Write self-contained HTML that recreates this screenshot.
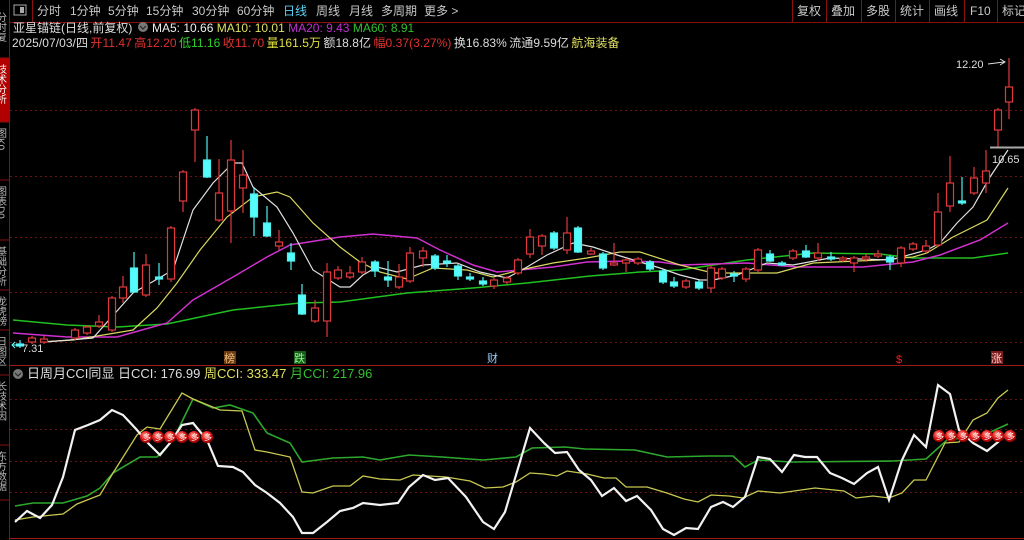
<!DOCTYPE html>
<html><head><meta charset="utf-8"><style>
html,body{margin:0;padding:0;background:#000;width:1024px;height:540px;overflow:hidden}
body{font-family:"Liberation Sans","Noto Sans CJK SC",sans-serif;position:relative}
.t{position:absolute;white-space:nowrap;font-size:12px;line-height:14px}
.m{position:absolute;top:4px;font-size:12px;line-height:14px;color:#c8c8c8;white-space:nowrap}
</style></head><body>
<svg width="1024" height="540" style="position:absolute;left:0;top:0" font-family="Liberation Sans, Noto Sans CJK SC, sans-serif">
<rect x="0" y="58" width="9" height="64" fill="#b00000"/>
<g stroke="#8a1010" stroke-width="1">
<line x1="9.5" y1="0" x2="9.5" y2="540"/>
<line x1="0" y1="58" x2="9" y2="58"/><line x1="0" y1="122" x2="9" y2="122"/><line x1="0" y1="180" x2="9" y2="180"/><line x1="0" y1="240" x2="9" y2="240"/><line x1="0" y1="290" x2="9" y2="290"/><line x1="0" y1="330" x2="9" y2="330"/><line x1="0" y1="375" x2="9" y2="375"/><line x1="0" y1="445" x2="9" y2="445"/><line x1="0" y1="500" x2="9" y2="500"/>
</g>
<g fill="#bbb" font-size="10">
<text x="0" y="12" writing-mode="tb">分时复</text>
<text x="0" y="64" writing-mode="tb" fill="#fff">技术分析</text>
<text x="0" y="128" writing-mode="tb">图K0</text>
<text x="0" y="186" writing-mode="tb">图表D0</text>
<text x="0" y="246" writing-mode="tb">基础分析</text>
<text x="0" y="296" writing-mode="tb">龙虎榜</text>
<text x="0" y="336" writing-mode="tb">日图区</text>
<text x="0" y="381" writing-mode="tb">长技术因</text>
<text x="0" y="451" writing-mode="tb">东方数据</text>
</g>
<line x1="10" y1="22.5" x2="1024" y2="22.5" stroke="#8a1010"/>
<line x1="32.5" y1="0" x2="32.5" y2="22" stroke="#8a1010"/>
<rect x="14" y="5" width="12" height="10" fill="none" stroke="#aaa"/><rect x="20" y="7" width="4" height="6" fill="#aaa"/>
<g stroke="#8a1010"><line x1="792.5" y1="0" x2="792.5" y2="22"/><line x1="826.5" y1="0" x2="826.5" y2="22"/><line x1="861.5" y1="0" x2="861.5" y2="22"/><line x1="895.5" y1="0" x2="895.5" y2="22"/><line x1="929.5" y1="0" x2="929.5" y2="22"/><line x1="964.5" y1="0" x2="964.5" y2="22"/><line x1="997.5" y1="0" x2="997.5" y2="22"/></g>
<g stroke="#6a1515" stroke-dasharray="2,3"><line x1="10" y1="110.5" x2="1024" y2="110.5"/><line x1="10" y1="176.5" x2="1024" y2="176.5"/><line x1="10" y1="237.5" x2="1024" y2="237.5"/><line x1="10" y1="292.5" x2="1024" y2="292.5"/><line x1="10" y1="342.5" x2="1024" y2="342.5"/>
<line x1="10" y1="399.5" x2="1024" y2="399.5"/><line x1="10" y1="429.5" x2="1024" y2="429.5"/><line x1="10" y1="461.5" x2="1024" y2="461.5"/><line x1="10" y1="492.5" x2="1024" y2="492.5"/></g>
<line x1="10" y1="365.5" x2="1024" y2="365.5" stroke="#9a1a1a"/>
<line x1="10" y1="538.5" x2="1024" y2="538.5" stroke="#9a1a1a"/>
<g fill="none" stroke-width="1.2">
<polyline stroke="#20c020" stroke-width="1.5" points="13,320 67,325 117,327 167,324 233,310 300,303 340,302 407,293 473,288 527,283 590,276 640,272 680,270 747,260 813,253 880,254 913,258 973,258 1008,253"/>
<polyline stroke="#d030d0" stroke-width="1.5" points="13,333 67,337 117,337 167,323 193,300 233,277 267,257 290,245 340,237 373,234 417,238 440,250 473,265 497,272 520,270 553,267 587,262 627,261 660,262 680,265 747,263 797,267 863,267 913,262 940,255 980,240 1008,223"/>
<polyline stroke="#d8d860" points="40,342 73,340 133,330 157,308 177,283 200,250 227,217 253,197 277,192 290,197 313,223 340,247 360,262 380,272 407,279 433,268 467,270 493,277 520,270 553,263 587,258 620,252 640,252 680,265 713,273 747,273 777,273 813,263 880,260 913,257 927,253 953,237 987,220 1008,188"/>
<polyline stroke="#e0e0e0" points="45,342 93,338 133,293 173,270 193,210 213,183 233,163 242,163 253,187 277,207 293,233 313,270 340,287 350,287 363,275 377,267 397,272 423,265 457,263 480,272 507,278 527,267 547,255 573,243 593,247 617,255 640,262 660,268 680,275 700,280 713,280 737,275 767,263 793,265 830,258 890,260 927,250 940,243 957,223 973,207 990,177 1008,150"/>
</g>
<g stroke="#e0383c" fill="#000" stroke-width="1.2">
<line x1="32" y1="336" x2="32" y2="344"/><rect x="28.5" y="338" width="7" height="4"/>
<line x1="44" y1="336" x2="44" y2="344"/><rect x="40.5" y="339" width="7" height="3"/>
<line x1="75" y1="328" x2="75" y2="340"/><rect x="71.5" y="330" width="7" height="8"/>
<line x1="87" y1="325" x2="87" y2="335"/><rect x="83.5" y="327" width="7" height="6"/>
<line x1="99" y1="315" x2="99" y2="328"/><rect x="95.5" y="322" width="7" height="4"/>
<line x1="112" y1="296" x2="112" y2="332"/><rect x="108.5" y="298" width="7" height="32"/>
<line x1="123" y1="276" x2="123" y2="303"/><rect x="119.5" y="287" width="7" height="11"/>
<line x1="146" y1="254" x2="146" y2="297"/><rect x="142.5" y="265" width="7" height="30"/>
<line x1="171" y1="226" x2="171" y2="282"/><rect x="167.5" y="228" width="7" height="51"/>
<line x1="183" y1="170" x2="183" y2="212"/><rect x="179.5" y="172" width="7" height="29"/>
<line x1="195" y1="108" x2="195" y2="162"/><rect x="191.5" y="110" width="7" height="20"/>
<line x1="219" y1="159" x2="219" y2="222"/><rect x="215.5" y="193" width="7" height="27"/>
<line x1="231" y1="140" x2="231" y2="243"/><rect x="227.5" y="160" width="7" height="51"/>
<line x1="243" y1="150" x2="243" y2="213"/><rect x="239.5" y="175" width="7" height="13"/>
<line x1="279" y1="230" x2="279" y2="250"/><rect x="275.5" y="242" width="7" height="4"/>
<line x1="315" y1="300" x2="315" y2="323"/><rect x="311.5" y="308" width="7" height="13"/>
<line x1="327" y1="263" x2="327" y2="337"/><rect x="323.5" y="272" width="7" height="49"/>
<line x1="338" y1="266" x2="338" y2="280"/><rect x="334.5" y="270" width="7" height="8"/>
<line x1="350" y1="266" x2="350" y2="279"/><rect x="346.5" y="273" width="7" height="4"/>
<line x1="362" y1="257" x2="362" y2="274"/><rect x="358.5" y="262" width="7" height="10"/>
<line x1="399" y1="264" x2="399" y2="289"/><rect x="395.5" y="277" width="7" height="10"/>
<line x1="410" y1="247" x2="410" y2="283"/><rect x="406.5" y="253" width="7" height="28"/>
<line x1="423" y1="247" x2="423" y2="267"/><rect x="419.5" y="251" width="7" height="7"/>
<line x1="494" y1="278" x2="494" y2="289"/><rect x="490.5" y="280" width="7" height="6"/>
<line x1="507" y1="276" x2="507" y2="284"/><rect x="503.5" y="278" width="7" height="4"/>
<line x1="518" y1="258" x2="518" y2="275"/><rect x="514.5" y="260" width="7" height="13"/>
<line x1="530" y1="229" x2="530" y2="258"/><rect x="526.5" y="237" width="7" height="17"/>
<line x1="542" y1="234" x2="542" y2="255"/><rect x="538.5" y="236" width="7" height="10"/>
<line x1="567" y1="217" x2="567" y2="254"/><rect x="563.5" y="233" width="7" height="17"/>
<line x1="591" y1="248" x2="591" y2="255"/><rect x="587.5" y="251" width="7" height="3"/>
<line x1="614" y1="243" x2="614" y2="266"/><rect x="610.5" y="263" width="7" height="2"/>
<line x1="626" y1="258" x2="626" y2="272"/><rect x="622.5" y="260" width="7" height="3"/>
<line x1="638" y1="257" x2="638" y2="265"/><rect x="634.5" y="259" width="7" height="4"/>
<line x1="686" y1="279" x2="686" y2="289"/><rect x="682.5" y="281" width="7" height="6"/>
<line x1="711" y1="265" x2="711" y2="293"/><rect x="707.5" y="268" width="7" height="20"/>
<line x1="722" y1="267" x2="722" y2="280"/><rect x="718.5" y="269" width="7" height="9"/>
<line x1="746" y1="267" x2="746" y2="282"/><rect x="742.5" y="269" width="7" height="10"/>
<line x1="758" y1="248" x2="758" y2="272"/><rect x="754.5" y="250" width="7" height="20"/>
<line x1="793" y1="249" x2="793" y2="260"/><rect x="789.5" y="251" width="7" height="7"/>
<line x1="818" y1="243" x2="818" y2="261"/><rect x="814.5" y="253" width="7" height="5"/>
<line x1="843" y1="256" x2="843" y2="262"/><rect x="839.5" y="258" width="7" height="2"/>
<line x1="854" y1="256" x2="854" y2="272"/><rect x="850.5" y="258" width="7" height="5"/>
<line x1="866" y1="254" x2="866" y2="262"/><rect x="862.5" y="257" width="7" height="2"/>
<line x1="878" y1="250" x2="878" y2="258"/><rect x="874.5" y="254" width="7" height="2"/>
<line x1="901" y1="246" x2="901" y2="267"/><rect x="897.5" y="248" width="7" height="15"/>
<line x1="913" y1="242" x2="913" y2="251"/><rect x="909.5" y="244" width="7" height="5"/>
<line x1="926" y1="240" x2="926" y2="253"/><rect x="922.5" y="246" width="7" height="5"/>
<line x1="938" y1="193" x2="938" y2="247"/><rect x="934.5" y="212" width="7" height="33"/>
<line x1="950" y1="156" x2="950" y2="212"/><rect x="946.5" y="183" width="7" height="23"/>
<line x1="974" y1="167" x2="974" y2="195"/><rect x="970.5" y="178" width="7" height="15"/>
<line x1="986" y1="150" x2="986" y2="193"/><rect x="982.5" y="171" width="7" height="12"/>
<line x1="998" y1="108" x2="998" y2="147"/><rect x="994.5" y="110" width="7" height="20"/>
<line x1="1009" y1="58" x2="1009" y2="119"/><rect x="1005.5" y="87" width="7" height="15"/>
</g>
<g stroke="#50f0f0" fill="#54fcfc" stroke-width="1.2">
<line x1="20" y1="340" x2="20" y2="348"/><rect x="16.5" y="344" width="7" height="2"/>
<line x1="134" y1="252" x2="134" y2="293"/><rect x="130.5" y="268" width="7" height="24"/>
<line x1="159" y1="263" x2="159" y2="285"/><rect x="155.5" y="277" width="7" height="2"/>
<line x1="207" y1="136" x2="207" y2="178"/><rect x="203.5" y="160" width="7" height="17"/>
<line x1="254" y1="188" x2="254" y2="236"/><rect x="250.5" y="194" width="7" height="23"/>
<line x1="267" y1="206" x2="267" y2="237"/><rect x="263.5" y="223" width="7" height="13"/>
<line x1="291" y1="243" x2="291" y2="270"/><rect x="287.5" y="253" width="7" height="8"/>
<line x1="302" y1="284" x2="302" y2="315"/><rect x="298.5" y="295" width="7" height="19"/>
<line x1="375" y1="260" x2="375" y2="277"/><rect x="371.5" y="262" width="7" height="9"/>
<line x1="388" y1="261" x2="388" y2="287"/><rect x="384.5" y="277" width="7" height="3"/>
<line x1="435" y1="254" x2="435" y2="270"/><rect x="431.5" y="256" width="7" height="12"/>
<line x1="447" y1="255" x2="447" y2="267"/><rect x="443.5" y="261" width="7" height="2"/>
<line x1="458" y1="264" x2="458" y2="280"/><rect x="454.5" y="266" width="7" height="10"/>
<line x1="470" y1="273" x2="470" y2="281"/><rect x="466.5" y="277" width="7" height="2"/>
<line x1="483" y1="277" x2="483" y2="286"/><rect x="479.5" y="281" width="7" height="3"/>
<line x1="554" y1="231" x2="554" y2="250"/><rect x="550.5" y="233" width="7" height="15"/>
<line x1="578" y1="226" x2="578" y2="253"/><rect x="574.5" y="228" width="7" height="24"/>
<line x1="603" y1="252" x2="603" y2="270"/><rect x="599.5" y="254" width="7" height="14"/>
<line x1="650" y1="260" x2="650" y2="271"/><rect x="646.5" y="262" width="7" height="7"/>
<line x1="663" y1="269" x2="663" y2="284"/><rect x="659.5" y="271" width="7" height="11"/>
<line x1="674" y1="277" x2="674" y2="288"/><rect x="670.5" y="282" width="7" height="4"/>
<line x1="699" y1="280" x2="699" y2="290"/><rect x="695.5" y="282" width="7" height="6"/>
<line x1="734" y1="271" x2="734" y2="282"/><rect x="730.5" y="274" width="7" height="2"/>
<line x1="770" y1="250" x2="770" y2="262"/><rect x="766.5" y="254" width="7" height="7"/>
<line x1="782" y1="261" x2="782" y2="266"/><rect x="778.5" y="263" width="7" height="2"/>
<line x1="806" y1="245" x2="806" y2="258"/><rect x="802.5" y="251" width="7" height="6"/>
<line x1="831" y1="252" x2="831" y2="261"/><rect x="827.5" y="257" width="7" height="2"/>
<line x1="890" y1="255" x2="890" y2="270"/><rect x="886.5" y="257" width="7" height="5"/>
<line x1="962" y1="177" x2="962" y2="205"/><rect x="958.5" y="201" width="7" height="2"/>
</g>
<text x="956" y="68" fill="#ddd" font-size="11">12.20</text>
<path d="M988 64 L1004 62 M1000 59 L1005 62 L1000 65" stroke="#ddd" fill="none"/>
<line x1="990" y1="147.5" x2="1024" y2="147.5" stroke="#aaa" stroke-width="2"/>
<text x="992" y="163" fill="#ddd" font-size="11">10.65</text>
<text x="22" y="352" fill="#ddd" font-size="11">7.31</text>
<path d="M12 345 L20 345 M15 342 L12 345 L15 348" stroke="#6ff" fill="none"/>
<rect x="224" y="351" width="12" height="13" fill="#6a3a10"/><text x="224" y="362" font-size="11" fill="#f0c080">榜</text>
<rect x="294" y="351" width="12" height="13" fill="#1a5a1a"/><text x="294" y="362" font-size="11" fill="#8f8">跌</text>
<text x="487" y="362" font-size="11" fill="#9cf">财</text>
<text x="896" y="363" font-size="11" fill="#e22">$</text>
<rect x="991" y="351" width="12" height="13" fill="#7a1a1a"/><text x="991" y="362" font-size="11" fill="#fcc">涨</text>
<g fill="none" stroke-width="1.3">
<polyline stroke="#2da82d" stroke-width="1.6" points="15,506 33,503 63,503 87,496 100,488 113,473 140,457 157,457 173,440 193,399 213,408 230,405 253,413 267,433 290,443 302,462 333,458 363,457 380,460 409,455 442,457 483,460 516,457 532,448 565,447 585,449 635,450 667,457 709,456 733,456 745,467 758,460 791,462 893,461 926,459 947,440 984,435 1008,424"/>
<polyline stroke="#c8c850" points="15,520 33,517 63,514 77,504 100,495 113,473 137,435 147,427 160,429 182,393 193,399 220,410 242,411 255,450 267,452 290,457 302,492 313,493 333,486 350,486 363,476 380,479 400,480 413,475 446,477 470,481 485,488 503,487 516,482 530,473 544,474 557,476 567,471 587,474 604,478 616,478 626,487 647,487 667,493 684,499 698,502 711,495 729,496 743,498 758,491 780,493 815,488 844,491 856,498 873,496 889,498 902,493 914,480 926,480 945,443 959,442 973,420 987,413 998,398 1008,390"/>
<polyline stroke="#f2f2f2" stroke-width="2.2" points="15,522 27,511 40,518 52,505 63,477 75,430 88,425 100,420 112,410 123,415 137,430 148,443 160,455 170,443 182,425 193,423 207,440 218,466 233,467 243,472 255,485 267,493 280,503 293,517 302,533 313,533 327,522 340,511 353,508 363,503 380,505 398,503 409,487 423,475 435,480 448,478 466,497 483,522 494,529 505,512 530,428 544,443 555,453 567,452 579,470 591,480 602,496 614,488 626,501 637,496 651,510 663,529 674,535 686,528 698,529 711,507 723,502 733,507 745,497 758,457 770,459 782,472 794,455 805,457 817,457 830,473 842,478 854,484 867,473 878,467 889,500 902,460 914,435 926,447 938,385 950,394 959,430 973,443 987,451 998,442 1008,432"/>
</g>
<defs><radialGradient id="b" cx="40%" cy="35%" r="65%"><stop offset="0" stop-color="#ffb0a0"/><stop offset="0.5" stop-color="#e82020"/><stop offset="1" stop-color="#900"/></radialGradient></defs>
<g fill="url(#b)">
<circle cx="146" cy="437" r="6"/><circle cx="158" cy="437" r="6"/><circle cx="170" cy="437" r="6"/><circle cx="182" cy="437" r="6"/><circle cx="194" cy="437" r="6"/><circle cx="207" cy="437" r="6"/>
<circle cx="939" cy="436" r="6"/><circle cx="951" cy="436" r="6"/><circle cx="963" cy="436" r="6"/><circle cx="975" cy="436" r="6"/><circle cx="987" cy="436" r="6"/><circle cx="998" cy="436" r="6"/><circle cx="1010" cy="436" r="6"/>
</g>
<g fill="#fff" font-size="8">
<text x="143" y="440">多</text><text x="155" y="440">多</text><text x="167" y="440">多</text><text x="179" y="440">多</text><text x="191" y="440">多</text><text x="204" y="440">多</text>
<text x="936" y="439">多</text><text x="948" y="439">多</text><text x="960" y="439">多</text><text x="972" y="439">多</text><text x="984" y="439">多</text><text x="995" y="439">多</text><text x="1007" y="439">多</text>
</g>
<circle cx="18" cy="374" r="5" fill="#777"/><path d="M15 373 L18 376 L21 373" stroke="#222" fill="none"/>
<circle cx="143" cy="27" r="5" fill="#777"/><path d="M140 26 L143 29 L146 26" stroke="#222" fill="none"/>
</svg>
<div class="m" style="left:37px">分时</div>
<div class="m" style="left:70px">1分钟</div>
<div class="m" style="left:108px">5分钟</div>
<div class="m" style="left:146px">15分钟</div>
<div class="m" style="left:192px">30分钟</div>
<div class="m" style="left:237px">60分钟</div>
<div class="m" style="left:283px;color:#5cd0f0">日线</div>
<div class="m" style="left:316px">周线</div>
<div class="m" style="left:349px">月线</div>
<div class="m" style="left:381px">多周期</div>
<div class="m" style="left:424px">更多 &gt;</div>
<div class="m" style="left:797px">复权</div>
<div class="m" style="left:831px">叠加</div>
<div class="m" style="left:866px">多股</div>
<div class="m" style="left:900px">统计</div>
<div class="m" style="left:934px">画线</div>
<div class="m" style="left:970px">F10</div>
<div class="m" style="left:1002px">标记</div>
<div class="t" style="left:13px;top:21px;color:#ddd">亚星锚链(日线,前复权)</div>
<div class="t" style="left:152px;top:21px;color:#eee">MA5: 10.66 <span style="color:#e0e060">MA10: 10.01</span> <span style="color:#c030d0">MA20: 9.43</span> <span style="color:#30c030">MA60: 8.91</span></div>
<div class="t" style="left:12px;top:36px;color:#ddd;letter-spacing:0.05px;word-spacing:-1px">2025/07/03/四 <span style="color:#e03030">开11.47 高12.20</span> <span style="color:#30d030">低11.16</span> <span style="color:#e03030">收11.70</span> <span style="color:#e0e040">量161.5万</span> 额18.8亿 <span style="color:#e03030">幅0.37(3.27%)</span> 换16.83% 流通9.59亿 <span style="color:#e0e060">航海装备</span></div>
<div class="t" style="left:27px;top:367px;color:#ddd;font-size:13px">日周月CCI同显 日CCI: 176.99 <span style="color:#e0e060">周CCI: 333.47</span> <span style="color:#30c030">月CCI: 217.96</span></div>
</body></html>
